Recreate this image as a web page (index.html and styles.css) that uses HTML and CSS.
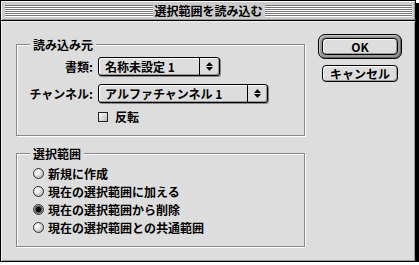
FILE: index.html
```html
<!DOCTYPE html>
<html lang="ja">
<head>
    <meta charset="UTF-8">
    <title>選択範囲を読み込む</title>
    <link rel="stylesheet" href="styles.css">
</head>
<body>
    <div class="window">
        <div class="titlebar">
            <span class="stripes"></span>
            <span class="title">選択範囲を読み込む</span>
            <span class="stripes"></span>
        </div>
        <div class="content">
            <div class="groups">
                <fieldset class="group source">
                    <legend>読み込み元</legend>
                    <div class="form">
                        <label class="label">書類:</label>
                        <div class="popup doc">
                            <span class="value">名称未設定 1</span>
                            <span class="arrows"><svg width="7" height="9" viewBox="0 0 7 9"><polygon points="3.5,0 7,4 0,4"/><polygon points="0,5 7,5 3.5,9"/></svg></span>
                        </div>
                        <label class="label">チャンネル:</label>
                        <div class="popup channel">
                            <span class="value">アルファチャンネル 1</span>
                            <span class="arrows"><svg width="7" height="9" viewBox="0 0 7 9"><polygon points="3.5,0 7,4 0,4"/><polygon points="0,5 7,5 3.5,9"/></svg></span>
                        </div>
                        <span></span>
                        <div class="check"><span class="box"></span>反転</div>
                    </div>
                </fieldset>
                <fieldset class="group selection">
                    <legend>選択範囲</legend>
                    <div class="radios">
                        <div class="radio"><span class="dot"></span>新規に作成</div>
                        <div class="radio"><span class="dot"></span>現在の選択範囲に加える</div>
                        <div class="radio"><span class="dot on"></span>現在の選択範囲から削除</div>
                        <div class="radio"><span class="dot"></span>現在の選択範囲との共通範囲</div>
                    </div>
                </fieldset>
            </div>
            <div class="buttons">
                <div class="default-ring"><button class="btn">OK</button></div>
                <button class="btn cancel">キャンセル</button>
            </div>
        </div>
    </div>
</body>
</html>
```

FILE: styles.css
```css
body {
    margin: 0;
    background: #fff;
    font: bold 12px "Noto Sans CJK JP", sans-serif;
    color: #000;
}
.window {
    width: 414px;
    height: 260px;
    border: 1px solid #000;
    box-shadow: 3px 3px 0 #000;
    background: #ddd;
    display: flex;
    flex-direction: column;
}
.titlebar {
    height: 19px;
    border-bottom: 1px solid #000;
    display: flex;
    align-items: flex-start;
    padding: 0 3px 0 4px;
    background: #ccc;
    box-shadow: inset 1px 1px 0 #fff, inset -1px -1px 0 #999;
}
.stripes {
    flex: 1;
    height: 12px;
    margin-top: 4px;
    background: repeating-linear-gradient(to bottom, #777 0 1px, #fff 1px 2px);
}
.title {
    padding: 0 2px;
    line-height: 19px;
}
.content {
    flex: 1;
    display: flex;
    padding-left: 15px;
    box-shadow: inset 1px 1px 0 #eee, inset -1px -1px 0 #999;
}
.group {
    box-sizing: border-box;
    width: 289px;
    min-width: 0;
    margin: 0;
    padding: 0;
    border: 1px solid #888;
    box-shadow: inset 1px 1px 0 #fff, 1px 1px 0 #fff;
}
.group legend {
    line-height: 15px;
    padding: 0 3px;
    margin-left: 13px;
    background: #ddd;
}
.source {
    margin-top: 16px;
}
.selection {
    margin-top: 10px;
}
.form {
    display: grid;
    grid-template-columns: 76px auto;
    column-gap: 5px;
    row-gap: 8px;
    align-items: center;
    justify-items: start;
    padding: 5px 0 12px;
}
.label {
    justify-self: end;
}
.popup {
    box-sizing: border-box;
    height: 19px;
    display: flex;
    border: 1px solid #000;
    border-radius: 3px;
    background: #ddd;
    box-shadow: inset 1px 1px 0 #fff, inset -1px -1px 0 #999, 1px 1px 0 #888;
}
.doc {
    width: 122px;
}
.channel {
    width: 170px;
}
.value {
    flex: 1;
    padding-left: 6px;
    line-height: 17px;
}
.arrows {
    width: 19px;
    border-left: 1px solid #000;
    display: flex;
    align-items: center;
    justify-content: center;
}
.check {
    display: flex;
    align-items: center;
    gap: 7px;
    line-height: 12px;
}
.box {
    box-sizing: border-box;
    width: 10px;
    height: 10px;
    border: 1px solid #222;
    background: linear-gradient(135deg, #fff, #bbb);
}
.radios {
    padding: 3px 0 10px 16px;
}
.radio {
    display: flex;
    align-items: center;
    gap: 4px;
    height: 18px;
}
.dot {
    box-sizing: border-box;
    width: 11px;
    height: 11px;
    border-radius: 50%;
    border: 1px solid #333;
    background: radial-gradient(circle at 35% 35%, #fff 0, #eee 30%, #999 100%);
}
.dot.on {
    background: radial-gradient(circle, #000 0 2.5px, #555 3px 3.5px, #bbb 4.5px);
}
.buttons {
    margin: 13px 0 0 13px;
}
.default-ring {
    width: 76px;
    padding: 3px;
    border: 1px solid #000;
    border-radius: 7px;
    background: #999;
    box-shadow: inset 1px 1px 0 #ccc, inset -1px -1px 0 #666;
}
.btn {
    display: block;
    box-sizing: border-box;
    width: 76px;
    height: 17px;
    padding: 0;
    border: 1px solid #000;
    border-radius: 4px;
    background: #ddd;
    box-shadow: inset 1px 1px 0 #fff, inset -1px -1px 0 #999;
    font: inherit;
    line-height: 15px;
    color: #000;
}
.cancel {
    margin: 6px 0 0 4px;
}
```
